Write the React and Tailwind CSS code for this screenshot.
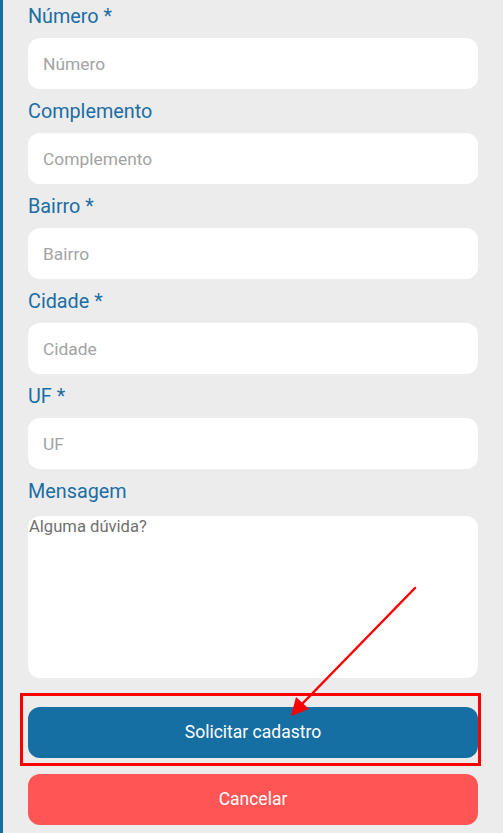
import React from "react";

const font = { fontFamily: "Roboto, 'Noto Sans', sans-serif" };

function Field({ label, placeholder }) {
  return (
    <div className="flex flex-col">
      <label className="text-[19.8px] leading-[22px] h-[22px] text-[#1b6ea5] mb-[10px]">{label}</label>
      <input
        placeholder={placeholder}
        className="h-[51px] w-full rounded-[12px] bg-white px-[15px] text-[17.4px] text-[#555] placeholder:text-[#a3a3a3] outline-none"
      />
    </div>
  );
}

export default function App() {
  return (
    <div style={font} className="relative h-[833px] w-[503px] overflow-hidden bg-[#ececec] border-l-[3px] border-[#166fa3]">
      <div className="flex flex-col gap-[12px] pt-[6px] pl-[25px] pr-[25px]">
        <Field label="Número *" placeholder="Número" />
        <Field label="Complemento" placeholder="Complemento" />
        <Field label="Bairro *" placeholder="Bairro" />
        <Field label="Cidade *" placeholder="Cidade" />
        <Field label="UF *" placeholder="UF" />
        <div className="flex flex-col">
          <label className="text-[19.8px] leading-[22px] h-[22px] text-[#1b6ea5] mb-[13px]">Mensagem</label>
          <textarea
            placeholder="Alguma dúvida?"
            className="h-[162px] w-full resize-none rounded-[12px] bg-white px-[1px] py-[1px] text-[16.6px] leading-[20px] placeholder:text-[#707070] outline-none"
          />
        </div>
        <div className="flex flex-col gap-[16px] mt-[17px]">
          <button className="h-[51px] w-full rounded-[12px] bg-[#166fa3] text-white text-[17.5px]">Solicitar cadastro</button>
          <button className="h-[51px] w-full rounded-[12px] bg-[#ff5555] text-white text-[17.5px]">Cancelar</button>
        </div>
      </div>
      <div className="pointer-events-none absolute left-[17px] top-[693px] h-[73px] w-[461px] border-[3px] border-[#ff0000]" />
      <svg className="pointer-events-none absolute left-[-3px] top-0" width="503" height="833">
        <line x1="415" y1="588" x2="302" y2="704" stroke="#ff0000" strokeWidth="2.5" strokeLinecap="round" />
        <polygon points="291,716 296,697 309,709" fill="#ff0000" />
      </svg>
    </div>
  );
}
